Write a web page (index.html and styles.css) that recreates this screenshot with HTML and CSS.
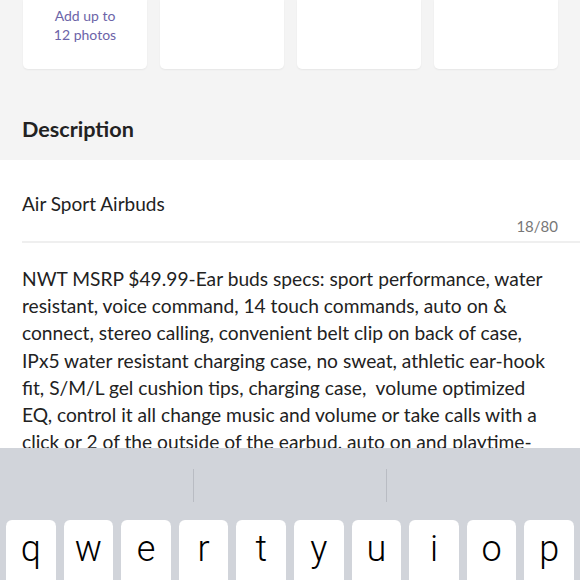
FILE: index.html
```html
<!DOCTYPE html>
<html lang="en">
<head>
    <meta charset="UTF-8">
    <meta name="viewport" content="width=device-width, initial-scale=1.0">
    <title>New Listing</title>
    <link rel="stylesheet" href="styles.css">
</head>
<body>

    <!-- Photo slots -->
    <div class="photo-row">
        <div class="photo-tile photo-add">
            <span>Add up to</span>
            <span>12 photos</span>
        </div>
        <div class="photo-tile"></div>
        <div class="photo-tile"></div>
        <div class="photo-tile"></div>
    </div>

    <h2 class="section-title">Description</h2>

    <!-- Listing form -->
    <div class="listing-form">
        <div class="field-title">
            <div class="field-value">Air Sport Airbuds</div>
            <div class="field-count">18/80</div>
        </div>
        <p class="field-desc">NWT MSRP $49.99-Ear buds specs: sport performance, water resistant, voice command, 14 touch commands, auto on &amp; connect, stereo calling, convenient belt clip on back of case, IPx5 water resistant charging case, no sweat, athletic ear-hook fit, S/M/L gel cushion tips, charging case,&nbsp; volume optimized EQ, control it all change music and volume or take calls with a click or 2 of the outside of the earbud, auto on and playtime-</p>
    </div>

    <!-- On-screen keyboard -->
    <div class="keyboard">
        <div class="kb-suggest">
            <span></span>
            <span></span>
            <span></span>
        </div>
        <div class="kb-row">
            <div class="kb-key">q</div>
            <div class="kb-key">w</div>
            <div class="kb-key">e</div>
            <div class="kb-key">r</div>
            <div class="kb-key">t</div>
            <div class="kb-key">y</div>
            <div class="kb-key">u</div>
            <div class="kb-key">i</div>
            <div class="kb-key">o</div>
            <div class="kb-key">p</div>
        </div>
    </div>

</body>
</html>
```

FILE: styles.css
```css
body {
    margin: 0;
    height: 580px;
    overflow: hidden;
    background-color: #f4f4f4;
    font-family: 'Lato', 'Open Sans', sans-serif;
    color: #222;
}

.photo-row {
    display: flex;
    gap: 13px;
    padding: 0 22px 0 23px;
}

.photo-tile {
    flex: 1;
    height: 69px;
    background: #fff;
    border-radius: 0 0 5px 5px;
    box-shadow: 0 1px 2px rgba(0, 0, 0, 0.06);
}

.photo-add {
    display: flex;
    flex-direction: column;
    align-items: center;
    padding-top: 6px;
    box-sizing: border-box;
    color: #6c64a8;
    font-size: 14px;
    line-height: 19px;
}

.section-title {
    margin: 0;
    padding: 47px 22px 18px;
    font-size: 21.6px;
    line-height: 26px;
    font-weight: 700;
    color: #222;
}

.listing-form {
    background: #fff;
    height: 420px;
    overflow: hidden;
}

.field-title {
    margin-left: 22px;
    padding: 32px 22px 0 0;
    border-bottom: 2px solid #efefef;
}

.field-value {
    font-size: 19px;
    line-height: 24px;
}

.field-count {
    text-align: right;
    margin-top: 0;
    padding-bottom: 5px;
    font-size: 15px;
    line-height: 20px;
    color: #777;
}

.field-desc {
    margin: 0;
    padding: 22px 22px 0;
    font-size: 19.2px;
    line-height: 27.2px;
    color: #222;
}

.keyboard {
    position: fixed;
    left: 0;
    right: 0;
    bottom: 0;
    height: 132px;
    background: #d1d4da;
}

.kb-suggest {
    display: flex;
    height: 72px;
    align-items: center;
}

.kb-suggest span {
    flex: 1;
    height: 33px;
    margin-top: 2px;
    border-left: 1px solid #b9bcc3;
}

.kb-suggest span:first-child {
    border-left: none;
}

.kb-row {
    display: flex;
    gap: 8px;
    padding: 0 6px;
}

.kb-key {
    flex: 1;
    height: 70px;
    background: #fff;
    border-radius: 6px;
    box-shadow: 0 1px 0 #8a8d93;
    text-align: center;
    font-family: 'Roboto', 'Liberation Sans', sans-serif;
    font-weight: 300;
    font-size: 36px;
    line-height: 58px;
    color: #000;
}
```
